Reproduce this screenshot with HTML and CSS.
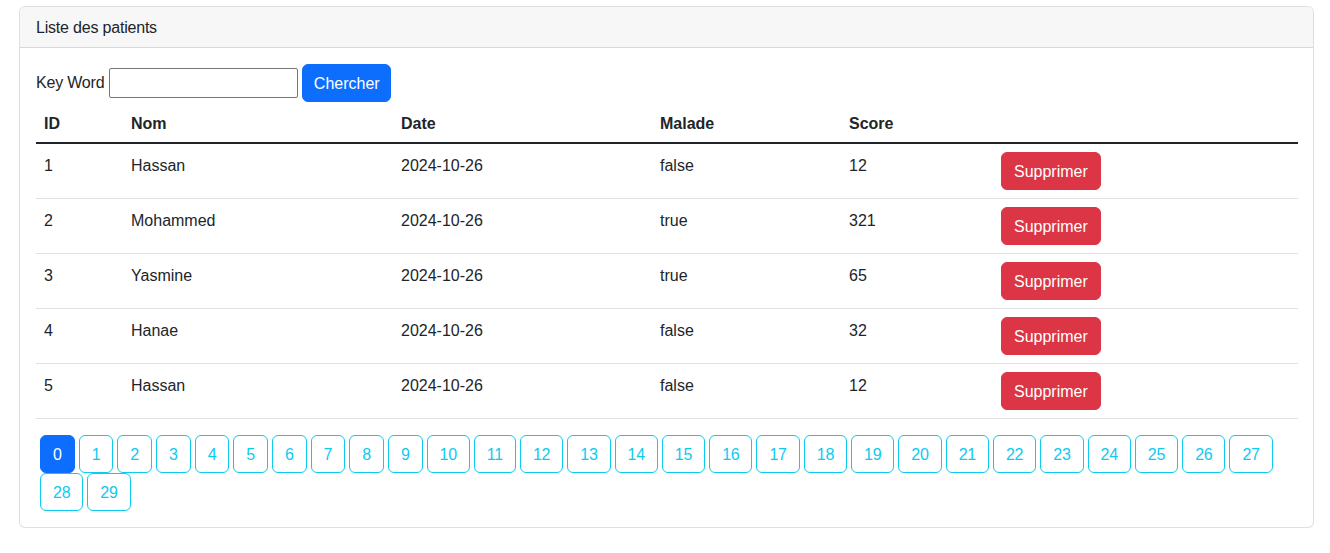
FILE: index.html
```html
<!DOCTYPE html>
<html lang="fr">
<head>
<meta charset="utf-8">
<title>Patients</title>
<link rel="stylesheet" href="styles.css">
</head>
<body>
<div class="page">
  <div class="card">
    <div class="card-header">Liste des patients</div>
    <div class="card-body">
      <form class="search">
        <label class="search-label">Key Word</label>
        <input class="search-input" type="text">
        <button type="button" class="btn btn-primary btn-search">Chercher</button>
      </form>
      <table class="table">
        <thead>
          <tr>
            <th class="c-id">ID</th>
            <th class="c-nom">Nom</th>
            <th class="c-date">Date</th>
            <th class="c-malade">Malade</th>
            <th class="c-score">Score</th>
            <th class="c-act"></th>
          </tr>
        </thead>
        <tbody>
          <tr><td>1</td><td>Hassan</td><td>2024-10-26</td><td>false</td><td>12</td><td><button class="btn btn-danger">Supprimer</button></td></tr>
          <tr><td>2</td><td>Mohammed</td><td>2024-10-26</td><td>true</td><td>321</td><td><button class="btn btn-danger">Supprimer</button></td></tr>
          <tr><td>3</td><td>Yasmine</td><td>2024-10-26</td><td>true</td><td>65</td><td><button class="btn btn-danger">Supprimer</button></td></tr>
          <tr><td>4</td><td>Hanae</td><td>2024-10-26</td><td>false</td><td>32</td><td><button class="btn btn-danger">Supprimer</button></td></tr>
          <tr><td>5</td><td>Hassan</td><td>2024-10-26</td><td>false</td><td>12</td><td><button class="btn btn-danger">Supprimer</button></td></tr>
        </tbody>
      </table>
      <ul class="pages">
        <li><a class="btn btn-info active">0</a></li>
        <li><a class="btn btn-info">1</a></li>
        <li><a class="btn btn-info">2</a></li>
        <li><a class="btn btn-info">3</a></li>
        <li><a class="btn btn-info">4</a></li>
        <li><a class="btn btn-info">5</a></li>
        <li><a class="btn btn-info">6</a></li>
        <li><a class="btn btn-info">7</a></li>
        <li><a class="btn btn-info">8</a></li>
        <li><a class="btn btn-info">9</a></li>
        <li><a class="btn btn-info">10</a></li>
        <li><a class="btn btn-info">11</a></li>
        <li><a class="btn btn-info">12</a></li>
        <li><a class="btn btn-info">13</a></li>
        <li><a class="btn btn-info">14</a></li>
        <li><a class="btn btn-info">15</a></li>
        <li><a class="btn btn-info">16</a></li>
        <li><a class="btn btn-info">17</a></li>
        <li><a class="btn btn-info">18</a></li>
        <li><a class="btn btn-info">19</a></li>
        <li><a class="btn btn-info">20</a></li>
        <li><a class="btn btn-info">21</a></li>
        <li><a class="btn btn-info">22</a></li>
        <li><a class="btn btn-info">23</a></li>
        <li><a class="btn btn-info">24</a></li>
        <li><a class="btn btn-info">25</a></li>
        <li><a class="btn btn-info">26</a></li>
        <li><a class="btn btn-info">27</a></li>
        <li><a class="btn btn-info">28</a></li>
        <li><a class="btn btn-info">29</a></li>
      </ul>
    </div>
  </div>
</div>
</body>
</html>
```

FILE: styles.css
```css
*, *::before, *::after { box-sizing: border-box; }

html, body {
  margin: 0;
  padding: 0;
  background: #fff;
}

body {
  font-family: "Liberation Sans", Arial, sans-serif;
  font-size: 16px;
  line-height: 24px;
  color: #212529;
}

.page {
  padding: 6px 16px 0 19px;
}

.card {
  border: 1px solid rgba(0, 0, 0, 0.125);
  border-radius: 6px;
  background: #fff;
}

.card-header {
  padding: 9px 16px 7px;
  background: #f7f7f7;
  border-bottom: 1px solid rgba(0, 0, 0, 0.125);
  border-radius: 5px 5px 0 0;
  letter-spacing: -0.2px;
}

.card-body {
  padding: 16px;
}

.search {
  display: flex;
  align-items: center;
  margin: 0;
}

.search-label {
  margin-right: 5px;
  letter-spacing: -0.2px;
}

.search-input {
  width: 189px;
  height: 30px;
  border: 1px solid #767676;
  border-radius: 2px;
  padding: 1px 2px;
  font: inherit;
  margin-right: 4px;
}

.btn {
  display: inline-block;
  padding: 7px 12px 5px;
  font: inherit;
  font-size: 16px;
  line-height: 24px;
  border: 1px solid transparent;
  border-radius: 6px;
  cursor: pointer;
  text-decoration: none;
  text-align: center;
}

.btn-search {
  padding-left: 10.5px;
  padding-right: 10.5px;
}

.btn-primary {
  background: #0d6efd;
  border-color: #0d6efd;
  color: #fff;
}

.btn-danger {
  background: #dc3545;
  border-color: #dc3545;
  color: #fff;
}

.btn-info {
  background: transparent;
  border-color: #0dcaf0;
  color: #0dcaf0;
  letter-spacing: -0.25px;
}

.btn-info.active {
  background: #0d6efd;
  border-color: #0d6efd;
  color: #fff;
}

.table {
  width: 100%;
  table-layout: fixed;
  border-collapse: collapse;
  margin-bottom: 16px;
  vertical-align: top;
}

.table th,
.table td {
  padding: 10px 8px 6px;
  text-align: left;
  vertical-align: top;
}

.table td:last-child {
  padding-top: 8px;
  padding-bottom: 8px;
}

.table th {
  font-weight: bold;
}

.table thead tr {
  border-bottom: 2px solid #212529;
}

.table tbody tr {
  border-bottom: 1px solid #dee2e6;
}

.c-id { width: 87px; }
.c-nom { width: 270px; }
.c-date { width: 259px; }
.c-malade { width: 189px; }
.c-score { width: 152px; }
.c-act { width: 305px; }

.pages {
  display: flex;
  flex-wrap: wrap;
  list-style: none;
  margin: 0;
  padding: 0;
}

.pages li {
  margin-left: 4px;
}
```
